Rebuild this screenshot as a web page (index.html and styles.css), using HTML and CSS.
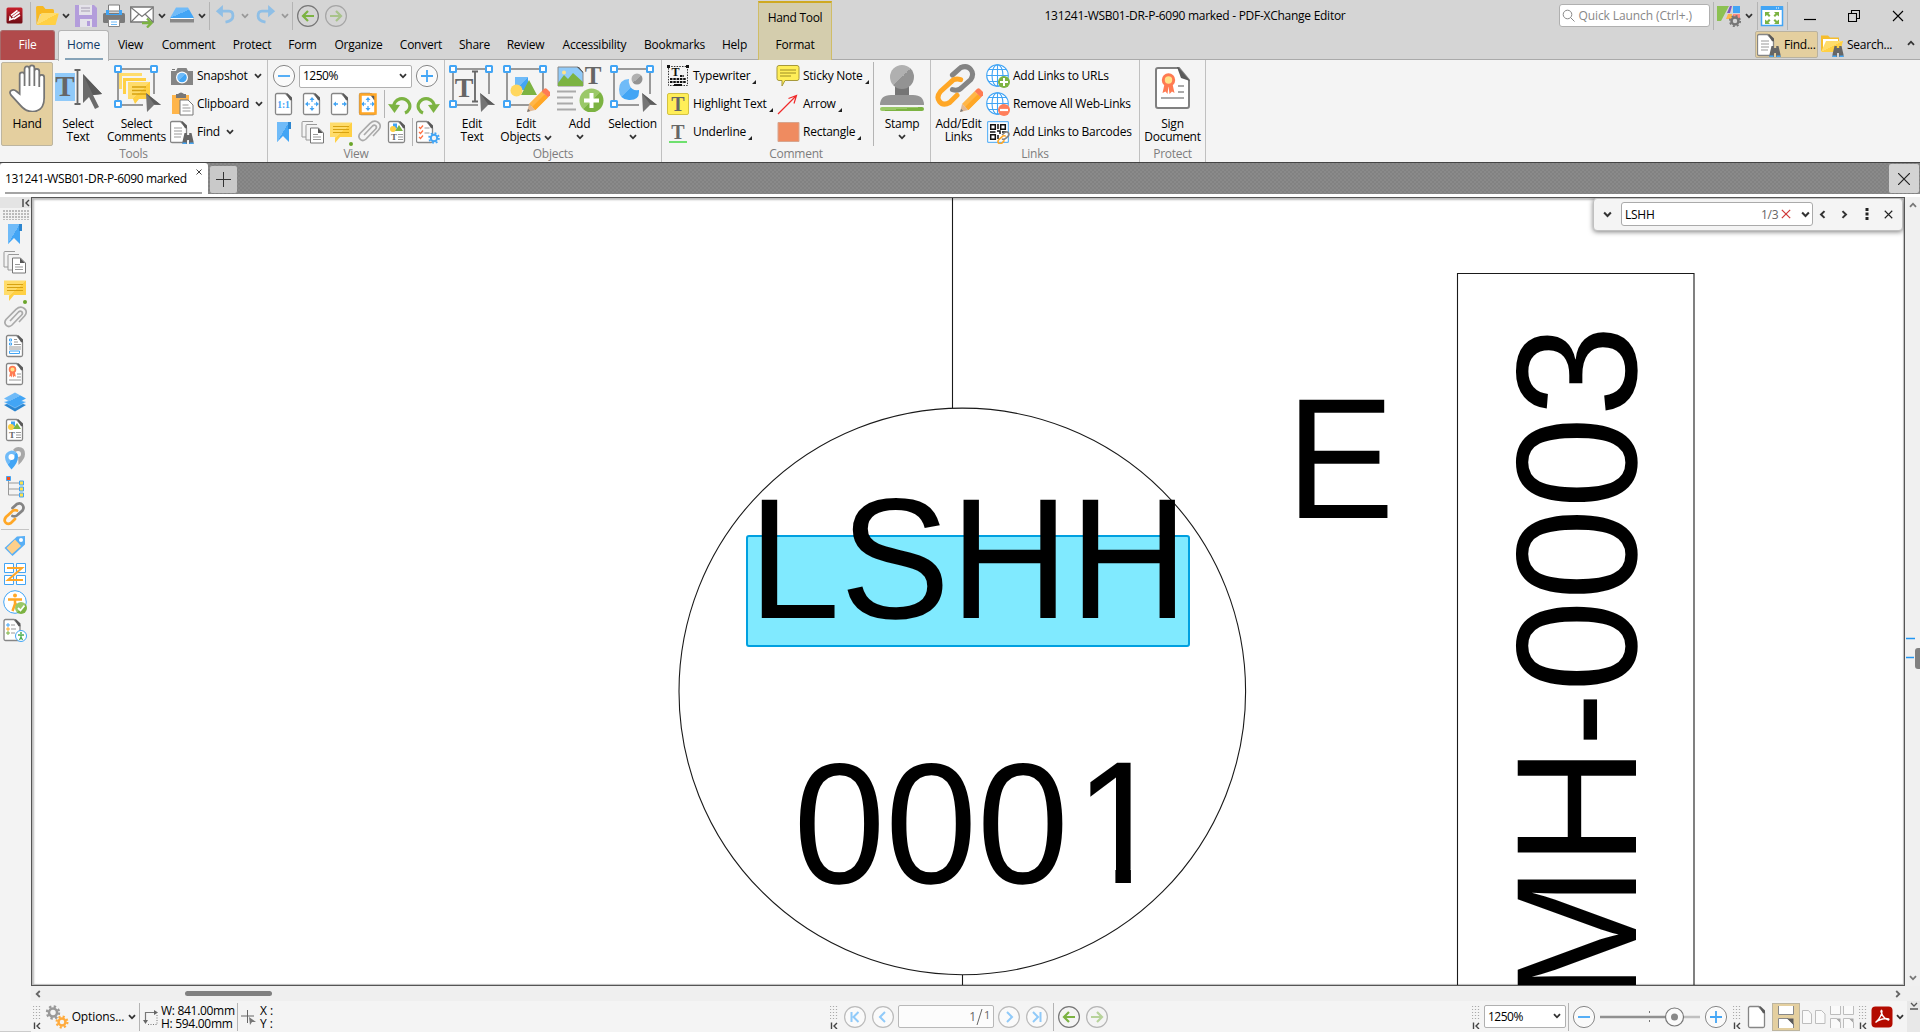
FILE: index.html
```html
<!DOCTYPE html>
<html lang="en">
<head>
<meta charset="utf-8">
<title>131241-WSB01-DR-P-6090 marked - PDF-XChange Editor</title>
<link rel="stylesheet" href="styles.css">
</head>
<body>
<svg class="defs" aria-hidden="true">
  <defs>
    <linearGradient id="gold" x1="0" y1="0" x2="1" y2="1"><stop offset=".5" stop-color="#ffdc6b"/><stop offset=".5" stop-color="#ffd044"/></linearGradient>
    <linearGradient id="azure" x1="0" y1="0" x2="1" y2="1"><stop offset=".5" stop-color="#70bbf8"/><stop offset=".5" stop-color="#42a5f5"/></linearGradient>
    <linearGradient id="iron" x1="0" y1="0" x2="1" y2="1"><stop offset=".5" stop-color="#b0b0b0"/><stop offset=".5" stop-color="#939393"/></linearGradient>
    <linearGradient id="leaf" x1="0" y1="0" x2="1" y2="1"><stop offset=".5" stop-color="#9ac868"/><stop offset=".5" stop-color="#7cb342"/></linearGradient>
    <linearGradient id="ruby" x1="0" y1="0" x2="0" y2="1"><stop offset="0" stop-color="#c8202c"/><stop offset="1" stop-color="#6e0c14"/></linearGradient>
  </defs>
  <symbol id="chev" viewBox="0 0 8 6"><path d="M1 1.2 4 4.3 7 1.2" fill="none" stroke="currentColor" stroke-width="1.8"/></symbol>
  <symbol id="page" viewBox="0 0 24 24"><path d="M5 1.5h8.5l6 6.5v13a1.5 1.5 0 0 1-1.500 1.500H5A1.500 1.500 0 0 1 3.500 21V3A1.500 1.500 0 0 1 5 1.500z" fill="#fff" stroke="#868686" stroke-width="1.300"/><path d="M14 1.200h1.500L20 5.500V8.200h-2z" fill="#5a5a5a"/></symbol>
  <symbol id="handle" viewBox="0 0 8 8"><rect x="1" y="1" width="6" height="6" rx=".5" fill="#fff" stroke="#42a5f5" stroke-width="2"/></symbol>
  <symbol id="frame" viewBox="0 0 48 48"><path d="M5 5h36M5 5v36M41 5v25M5 41h25" fill="none" stroke="#999" stroke-width="2"/><use href="#handle" x="1" y="1" width="8" height="8"/><use href="#handle" x="37" y="1" width="8" height="8"/><use href="#handle" x="1" y="36" width="8" height="8"/></symbol>
  <symbol id="cursor" viewBox="0 0 16 20"><path d="M0 0 15 12H9l-1 0L1 19z" fill="#757575"/><path d="M0 0 15 12 8 11z" fill="#5c5c5c"/></symbol>
  <symbol id="pencil" viewBox="0 0 24 24"><path d="M1 23 3 15 9 21z" fill="#e0b894"/><path d="M3 15 15 3l6 6L9 21z" fill="#ffb648"/><path d="M6 18 18 6l3 3L9 21z" fill="#ffa726"/><path d="m15 3 2.500-2.300q1.200-.9 2.400 0l3.500 3.600q1 1.200 0 2.300L21 9z" fill="#ff7b52"/><path d="M1 23 2 20l2 2z" fill="#777"/></symbol>
  <symbol id="bino" viewBox="0 0 12 12"><path d="M2.500 1h2.300v2h2.400V1h2.300l2 8.500V12H7V8H5v4H.5V9.500z" fill="#666"/><path d="M.5 10.500h4V12h-4zM7.500 10.500h4V12h-4z" fill="#42a5f5"/></symbol>
  <symbol id="app" viewBox="0 0 17 17"><rect x=".5" y=".5" width="16" height="16" rx="1.500" fill="url(#ruby)"/><path d="M5 8.300 11.500 3.500M6.500 10l7-5M8 12l6-4" stroke="#fff" stroke-width="1.600"/><path d="m3.500 8.500-.7 5.500 5.800-2-1-1.500-2.500 1-.3-1.300z" fill="#fff"/></symbol>
  <symbol id="folder" viewBox="0 0 24 24"><path d="M1 3.500q0-1.500 1.500-1.500H8l2.500 3h7q1.500 0 1.500 1.500V10H5L1.500 21z" fill="#f7b821"/><path d="M6.500 9h16q1.500 0 1 1.500L20.500 21H1.500z" fill="url(#gold)"/></symbol>
  <symbol id="save" viewBox="0 0 24 24"><path d="M1 1h19l3 3v19H1z" fill="#b39ddb"/><path d="M5 1h13v10H5zM6 15h12v8H6z" fill="#e4e2ea"/><path d="M7 4h9M7 7h9" stroke="#b9b4c4" stroke-width="1.500"/><path d="M13 17h3v5h-3z" fill="#b39ddb"/></symbol>
  <symbol id="print" viewBox="0 0 24 24"><path d="M6.500 1h11v6h-11z" fill="#fff" stroke="#7c7c7c"/><rect x="1" y="9" width="22" height="10" rx="1.500" fill="#7b7b7b"/><path d="M4 6h3v4h10V6h3v5H4z" fill="#42a5f5"/><path d="M6.500 15.500h11v7h-11z" fill="#fff" stroke="#888"/><path d="M9 18h6M9 20.500h6" stroke="#70bbf8"/></symbol>
  <symbol id="mail" viewBox="0 0 24 24"><path d="M.7 3h22.500v15H.7z" fill="#fff" stroke="#777" stroke-width="1.300"/><path d="m1 3.500 11 9 11-9M1 18l8-8M23 18l-8-8" fill="none" stroke="#777" stroke-width="1.100"/><path d="M12 19h9m-4-4.500 4.500 4.500-4.500 4.500" fill="none" stroke="#7cb342" stroke-width="2.300"/></symbol>
  <symbol id="scan" viewBox="0 0 24 24"><path d="M6 3.500h12L24 14H0z" fill="url(#azure)"/><path d="M0 15h24v3.500H0z" fill="#888"/><path d="M1 14.500h22" stroke="#fff"/></symbol>
  <symbol id="undo" viewBox="0 0 24 24"><path d="M4 8h12q4.500 0 4.500 5.500T12 20.500" transform="translate(0 -1)" fill="none" stroke="#8fbfe6" stroke-width="3.200"/><path d="M1 7 9 0v14z" fill="#8fbfe6"/></symbol>
  <symbol id="ring" viewBox="0 0 24 24"><circle cx="12" cy="12" r="10.400" fill="#fafafa" stroke="currentColor" stroke-width="1.200"/></symbol>
  <symbol id="back" viewBox="0 0 24 24"><circle cx="12" cy="12" r="10.400" fill="none" stroke="#777" stroke-width="1.200"/><path d="M18 12H7m5-5-5 5 5 5" fill="none" stroke="#7cb342" stroke-width="2.200"/></symbol>
  <symbol id="minus" viewBox="0 0 24 24"><circle cx="12" cy="12" r="10.600" fill="#fafafa" stroke="#888"/><path d="M6 12h12" stroke="#42a5f5" stroke-width="1.800"/></symbol>
  <symbol id="plus" viewBox="0 0 24 24"><circle cx="12" cy="12" r="10.600" fill="#fafafa" stroke="#888"/><path d="M6 12h12M12 6v12" stroke="#42a5f5" stroke-width="1.800"/></symbol>
  <symbol id="uiset" viewBox="0 0 24 24"><path d="M0 2h12L4 17H0z" fill="#8cc152"/><path d="M13 2h2l-2 7h-3z" fill="#7e57c2"/><path d="M16 2h7v7h-7z" fill="#42a5f5"/><path d="M11 10h4v5H9z" fill="#ffb74d"/><path d="M16 10h7v5h-7z" fill="#ff8a80"/><circle cx="18" cy="17" r="3.500" fill="#d5d5d5" stroke="#757575" stroke-width="2.500"/><circle cx="18" cy="17" r="5.200" fill="none" stroke="#757575" stroke-width="1.700" stroke-dasharray="2.040 2.040"/></symbol>
  <symbol id="full" viewBox="0 0 24 24"><path d="M1.500 3h21v18.500h-21z" fill="#fff" stroke="#42a5f5" stroke-width="1.500"/><path d="M1 2h22v4H1z" fill="#42a5f5"/><path d="M16 4h4" stroke="#fff" stroke-dasharray="1 1"/><path d="M5 8h5L8.500 9.500l2 2-1.500 1.500-2-2L5 12.500zM19 8h-5l1.500 1.500-2 2L15 13l2-2 2 1.500zM5 20h5l-1.500-1.500 2-2L9 15l-2 2-2-1.500zM19 20h-5l1.500-1.500-2-2L15 15l2 2 2-1.500z" fill="#7cb342"/></symbol>
  <symbol id="findpg" viewBox="0 0 24 24"><use href="#page" x="-3" width="24" height="24"/><path d="M4 8h8M4 11h8M4 14h8M4 17h7" stroke="#999"/><use href="#bino" x="12" y="12" width="12" height="12"/></symbol>
  <symbol id="findfd" viewBox="0 0 24 24"><path d="M1 2.500h7l2 2h9V18H1z" fill="#f5bd2d"/><path d="M3 6h15v9H3z" fill="#fff"/><path d="M6 8h17l-3 11H1z" fill="url(#gold)"/><use href="#bino" x="12" y="12" width="12" height="12"/></symbol>
  <symbol id="hand" viewBox="0 0 48 48"><path d="M17 30V10.500q0-2.500 2.500-2.500T22 10.500V22 5q0-3 2.500-3T27 5v17V3.500Q27 1 29.500 1T32 3.500V22 7q0-2.500 2.500-2.500T37 7v16V13q0-2.500 2.500-2.500T42 13v21q0 14-12 14-7 0-12-6L8 31q-2-3 .5-4.500T14 27.500z" fill="#fff" stroke="#757575" stroke-width="1.800" transform="translate(0 .5) scale(.98)"/></symbol>
  <symbol id="seltext" viewBox="0 0 48 48"><path d="M1 9h20v28H1z" fill="#90caf9"/><text x="11" y="32" class="serif" font-size="29" text-anchor="middle">T</text><path d="M20.500 6h6m-6 34h6M23.500 6v34" stroke="#666" stroke-width="1.800"/><path d="m29 10 19 20-9 1 6 12-4 2-6-12-6 6z" fill="#6b6b6b"/><path d="m29 10 19 20-9 1z" fill="#595959"/></symbol>
  <symbol id="note" viewBox="0 0 24 24"><path d="M1 2.500h22V17H11l-5 6v-6H1z" fill="url(#gold)"/><path d="M4 6.500h16M4 9.500h16M4 12.500h16" stroke="#d7a211"/></symbol>
  <symbol id="selcom" viewBox="0 0 48 48"><use href="#frame" width="48" height="48"/><path d="M6 9h23v3H9v13H6z" fill="#ffdc6b"/><path d="M10 14h23v3H13v13h-3z" fill="#ffd044"/><path d="M15 18h22v17H26l-4 5-2-5h-5z" fill="url(#gold)"/><path d="M19 23h14M19 26.500h14M19 30h14" stroke="#d7a211" stroke-width="1.500"/><use href="#cursor" x="33" y="29" width="16" height="20"/></symbol>
  <symbol id="camera" viewBox="0 0 24 24"><path d="M1 7h5l1.500-3h9L18 7h5v14H1z" fill="#858585"/><path d="M2 5h3v1H2z" fill="#777"/><circle cx="12" cy="13.500" r="6" fill="#fff"/><circle cx="12" cy="13.500" r="4.800" fill="url(#azure)"/></symbol>
  <symbol id="clip" viewBox="0 0 24 24"><path d="M2 3h17v19H2z" fill="#ffb54a"/><path d="M6 2h2q3-3 6 0h2v4H6z" fill="#777"/><path d="M10 8h8l5 5v10H10z" fill="#fff" stroke="#777"/><path d="M12.500 13h6M12.500 16h8M12.500 19h8" stroke="#999"/></symbol>
  <symbol id="p11" viewBox="0 0 24 24"><use href="#page" width="24" height="24"/><text x="11.500" y="16" class="serif blue" font-size="9.500" text-anchor="middle">1:1</text></symbol>
  <symbol id="pfit" viewBox="0 0 24 24"><use href="#page" width="24" height="24"/><path d="m12 5 2.500 3h-5zM12 19l2.500-3h-5zM5 12l3-2.500v5zM19 12l-3-2.500v5z" fill="#42a5f5"/><path d="M12 7v3m0 4v3M7 12h3m4 0h3" stroke="#42a5f5" stroke-width="1.200"/></symbol>
  <symbol id="pwid" viewBox="0 0 24 24"><use href="#page" width="24" height="24"/><path d="m5 12 3-2.500v5zM19 12l-3-2.500v5z" fill="#42a5f5"/><path d="M7 12h3m4 0h3" stroke="#42a5f5" stroke-width="1.500"/></symbol>
  <symbol id="pvis" viewBox="0 0 24 24"><use href="#pfit" width="24" height="24"/><path d="M4.500 2.500h15v19h-15z" fill="none" stroke="#ffa726" stroke-width="2.500"/></symbol>
  <symbol id="rot" viewBox="0 0 24 24"><path d="M6 15.500a8 7.500 0 1 1 11 5.500" fill="none" stroke="#7cb342" stroke-width="3.200"/><path d="m0 12 12 1-5.500 8z" fill="#7cb342"/></symbol>
  <symbol id="mark" viewBox="0 0 24 24"><path d="M5 2h12v20l-6-6-6 6z" fill="url(#azure)"/><path d="M16 2h3v7h-3z" fill="#2c86d0"/></symbol>
  <symbol id="pages" viewBox="0 0 24 24"><path d="M12 1.500H2q-1 0-1 1V17h4M16 4.500H6q-1 0-1 1V20h4" fill="none" stroke="#999"/><path d="M9.500 8h8l5 5v10h-13z" fill="#fff" stroke="#777"/><path d="M17 8v5h5z" fill="#555"/><path d="M12 14.500h5M12 17h8M12 19.500h8" stroke="#999"/></symbol>
  <symbol id="paper" viewBox="0 0 24 24"><path d="m7 15 8.500-9q1.800-1.600 3.200-.3 1.500 1.500-.1 3.300L9 19q-3 2.800-5.700.4T3 13.500L13 3.300Q17.500-.5 21.300 2.500t.2 7.500L16 16" fill="none" stroke="#aaa" stroke-width="1.700"/></symbol>
  <symbol id="content" viewBox="0 0 24 24"><use href="#page" width="24" height="24"/><path d="m8 3.500 4 0v5H8z" fill="#42a5f5"/><circle cx="8" cy="9" r="3" fill="#ffd044"/><path d="m14 5 4 6h-8z" fill="#7cb342"/><text x="9" y="20" class="serif" font-size="9" text-anchor="middle">T</text><path d="M13 14.500h5M13 17h5M13 19.500h5" stroke="#999"/></symbol>
  <symbol id="popt" viewBox="0 0 24 24"><use href="#page" x="-3" width="24" height="24"/><path d="m3 7 1.500 1.500L7 5.500M3 12l1.500 1.500L7 10.500M3 17l1.500 1.500L7 15.500" fill="none" stroke="#ff7043" stroke-width="1.200"/><path d="M8.500 8h5M8.500 13h5" stroke="#999"/><circle cx="18" cy="18" r="3.200" fill="#f4f4f4" stroke="#42a5f5" stroke-width="2"/><circle cx="18" cy="18" r="4.900" fill="none" stroke="#42a5f5" stroke-width="1.800" stroke-dasharray="1.900 1.940"/></symbol>
  <symbol id="edtext" viewBox="0 0 48 48"><use href="#frame" width="48" height="48"/><text x="16" y="33" class="serif" font-size="28" text-anchor="middle">T</text><path d="M24 7.500h6m-6 30h6m-3-30v30" stroke="#666" stroke-width="1.800"/><use href="#cursor" x="32" y="29" width="16" height="20"/></symbol>
  <symbol id="edobj" viewBox="0 0 48 48"><use href="#frame" width="48" height="48"/><path d="M13 13h13v13H13z" fill="url(#azure)"/><path d="m27 16 8 15H19z" fill="#7cb342"/><circle cx="14.500" cy="26.500" r="6" fill="#ffd75e"/><use href="#pencil" x="24" y="24" width="25" height="25"/></symbol>
  <symbol id="addobj" viewBox="0 0 48 48"><path d="M2 3h20l5 5v14H2z" fill="#90caf9" stroke="#888"/><path d="m21 3 6 6v-1l-4-5z" fill="#555"/><circle cx="8" cy="8.500" r="2" fill="#ffe28a"/><path d="m2 19 6-8 4 4 5-6 10 9v4H2z" fill="#7cb342"/><text x="37" y="20" class="serif" font-size="25" text-anchor="middle">T</text><path d="M1 27.500h19M1 33.500h16M1 39.500h16M1 45.500h19" stroke="#aaa" stroke-width="1.800"/><circle cx="35.500" cy="36.500" r="12" fill="url(#leaf)"/><path d="M35.500 29v15M28 36.500h15" stroke="#fff" stroke-width="4"/></symbol>
  <symbol id="selobj" viewBox="0 0 48 48"><use href="#frame" width="48" height="48"/><circle cx="28" cy="15" r="5.500" fill="url(#iron)"/><path d="M20 15q-10 .5-10 10.500T20 36t10-8v-2q-7 1-9-4-2-4-1-7z" fill="url(#azure)"/><use href="#cursor" x="33" y="29" width="16" height="20"/></symbol>
  <symbol id="type" viewBox="0 0 24 24"><path d="M2.500 2.500h19v19h-19z" fill="none" stroke="#333" stroke-dasharray="1.500 1.200"/><path d="M1 1h3v3H1zM20 1h3v3h-3z" fill="#111"/><text x="9.500" y="12" class="serif dark" font-size="12" text-anchor="middle">T</text><path d="M14 12h4M4 15h16M4 18h16" stroke="#111" stroke-width="1.800" stroke-dasharray="2.500 .8"/><path d="M8 21h8" stroke="#111" stroke-width="2"/></symbol>
  <symbol id="hilite" viewBox="0 0 24 24"><rect x="1.500" y="1.500" width="21" height="21" rx="1.500" fill="#ffee58" stroke="#d3c243"/><text x="12" y="18.500" class="serif" font-size="20" text-anchor="middle">T</text></symbol>
  <symbol id="under" viewBox="0 0 24 24"><text x="12" y="18.500" class="serif" font-size="20" text-anchor="middle">T</text><path d="M3 22h18" stroke="#26d526" stroke-width="1.300"/></symbol>
  <symbol id="sticky" viewBox="0 0 24 24"><path d="M3 1.500h18q2 0 2 2v11q0 2-2 2H9L6 22v-5.500H3q-2 0-2-2v-11q0-2 2-2z" fill="#ffee58" stroke="#a7993a"/><path d="M4 6h16M4 9h16M4 12h11" stroke="#9c8c25"/></symbol>
  <symbol id="arrow" viewBox="0 0 24 24"><path d="M2 22 20 4M12.500 6.500 20.500 3.500l-2.500 8" fill="none" stroke="#f02a2a" stroke-width="1.200"/></symbol>
  <symbol id="rect" viewBox="0 0 24 24"><path d="M2 2.500h21v19H2z" fill="#ef8b60" stroke="#d8a58e"/></symbol>
  <symbol id="stamp" viewBox="0 0 48 48"><path d="M17 20h14v12H17z" fill="#757575"/><circle cx="24" cy="13" r="12" fill="url(#iron)"/><path d="M2 41q0-10 11-10h22q11 0 11 10z" fill="#959595"/><rect x="2" y="43" width="44" height="4" rx="2" fill="url(#leaf)"/></symbol>
  <symbol id="chain" viewBox="0 0 48 48"><g fill="none" stroke-width="5.500" stroke-linecap="round"><path d="M19 28q7 2 11-3l9-8q4-6 0-11t-11-2l-9 8" stroke="#848484"/><path d="M28 17q-7-2-11 3l-11 10q-5 6-1 11t11 1l8-8" stroke="#ffa726"/></g></symbol>
  <symbol id="links" viewBox="0 0 48 48"><use href="#chain" x="0" y="0" width="44" height="44"/><use href="#pencil" x="24" y="24" width="25" height="25"/></symbol>
  <symbol id="globe" viewBox="0 0 24 24"><circle cx="11.500" cy="11.500" r="10.800" fill="#fff"/><g fill="none" stroke="#42a5f5" stroke-width="1.100"><circle cx="11.500" cy="11.500" r="10.800"/><ellipse cx="11.500" cy="11.500" rx="5.500" ry="10.800"/><path d="M1 11.500h21M11.500 1v21M3 5.500h17M3 17.500h17"/></g></symbol>
  <symbol id="gadd" viewBox="0 0 24 24"><use href="#globe" width="24" height="24"/><circle cx="18" cy="18" r="6" fill="#7cb342"/><path d="M18 14v8M14 18h8" stroke="#fff" stroke-width="2"/></symbol>
  <symbol id="grem" viewBox="0 0 24 24"><use href="#globe" width="24" height="24"/><circle cx="18" cy="18" r="6" fill="#ff7e5a"/><path d="M14 18h8" stroke="#fff" stroke-width="2.200"/></symbol>
  <symbol id="qr" viewBox="0 0 24 24"><path d="M1.700 1.700h20.600v20.600H1.700z" fill="#fff" stroke="#42a5f5"/><g fill="none" stroke="#111" stroke-width="1.500"><path d="M4.700 4.700h4.600v4.600H4.700zM14.700 4.700h4.600v4.600h-4.600zM4.700 14.700h4.600v4.600H4.700zM12 4v5M9.500 12H4m7-1h3v3m2-2h4m-8 3v4"/></g><use href="#chain" x="11" y="11" width="14" height="14"/></symbol>
  <symbol id="rosette" viewBox="0 0 16 24"><path d="m4 12-2 9 3-1.500L7 22l1-8 1 8 2.500-2.500L14 21l-2-9z" fill="#ff7b52"/><circle cx="8" cy="8" r="5.200" fill="#ffe28a" stroke="#ff7b52" stroke-width="3"/></symbol>
  <symbol id="sign" viewBox="0 0 48 48"><path d="M9 4h21l10 12v26q0 2-2 2H9q-2 0-2-2V6q0-2 2-2z" fill="#fff" stroke="#808080" stroke-width="2"/><path d="m28 3 1 0 12 14-9-3z" fill="#5a5a5a"/><use href="#rosette" x="11" y="8" width="17" height="24"/><path d="M29 22h6M29 28h6M12 34h23" stroke="#aaa" stroke-width="1.800"/></symbol>
  <symbol id="psign" viewBox="0 0 24 24"><use href="#page" width="24" height="24"/><use href="#rosette" x="5" y="3" width="9" height="13.500"/><path d="M14 12h4M14 15h4M6 18h12" stroke="#999"/></symbol>
  <symbol id="pform" viewBox="0 0 24 24"><use href="#page" width="24" height="24"/><path d="M6.500 5h2v2h-2zM6.500 9h2v2h-2zM6.500 17h10v2.500h-10z" fill="none" stroke="#42a5f5"/><path d="M11 5.500h3M11 8h4M11 10.500h7M6 13h12M6 15h12" stroke="#999"/></symbol>
  <symbol id="layers" viewBox="0 0 24 24"><path d="m12 11 11 4-11 6.500L1 15z" fill="#2a85d0"/><path d="m12 9 11 3-11 6L1 12z" fill="#42a5f5" stroke="#cfe6fa" stroke-width=".4"/><path d="m12 2.500 11 6-11 6-11-6z" fill="url(#azure)"/></symbol>
  <symbol id="dest" viewBox="0 0 24 24"><path d="M10 4q2-3 5.500-3 6.500 0 6.500 7 0 5-6.500 11L15 8z" fill="#a8a8a8"/><circle cx="15" cy="8" r="3" fill="#f4f4f4"/><path d="M8.500 23.500Q2 16 2 11t6.500-6.500Q15 5 15 11T8.500 23.500z" fill="url(#azure)"/><circle cx="8.500" cy="11" r="3" fill="#fff"/></symbol>
  <symbol id="tree" viewBox="0 0 24 24"><path d="M5.500 6v15H17M5.500 9H17M5.500 15H17" fill="none" stroke="#999"/><path d="M3.500 2.500h4v4h-4z" fill="#f4511e" stroke="#42a5f5"/><path d="M16.500 7h4v4h-4zM16.500 13h4v4h-4zM16.500 19h4v4h-4z" fill="#ffe04a" stroke="#42a5f5"/></symbol>
  <symbol id="tag" viewBox="0 0 24 24"><path d="M14 2.500 22 2v8.500L9.500 22 1.500 14z" fill="#58aff6"/><path d="M12 5.500 18 12l-9 8-5.500-6z" fill="#ffd08a"/><circle cx="18" cy="6" r="2" fill="#fff"/></symbol>
  <symbol id="order" viewBox="0 0 24 24"><path d="M1.500 1.500h9v9h-9zM13.500 1.500h9v9h-9zM1.500 13.500h9v9h-9zM13.500 13.500h9v9h-9z" fill="#fff" stroke="#42a5f5"/><path d="M4 6h15L5 18h15" fill="none" stroke="#ffa726" stroke-width="2"/></symbol>
  <symbol id="acc" viewBox="0 0 24 24"><circle cx="12" cy="12" r="11.300" fill="#fff" stroke="#42a5f5"/><circle cx="12" cy="5.500" r="2" fill="#ffa726"/><path d="M5 9.500h14M12 9v5l-2.500 7M12 13l2 3" fill="none" stroke="#ffa726" stroke-width="2.500"/><circle cx="18" cy="18" r="6" fill="url(#leaf)"/><path d="m15 18 2.500 2.500 4-5" fill="none" stroke="#fff" stroke-width="1.800"/></symbol>
  <symbol id="accrep" viewBox="0 0 24 24"><use href="#page" x="-2.500" width="24" height="24"/><path d="M4 6h2v2H4z" fill="none" stroke="#42a5f5"/><path d="M4 10h2v2H4z" fill="none" stroke="#ffa726"/><path d="M4 14h2v2H4z" fill="none" stroke="#7cb342"/><path d="M8 7h4M8 11h5M8 15h4" stroke="#999"/><circle cx="18" cy="18" r="5.500" fill="#fff" stroke="#42a5f5"/><circle cx="18" cy="15" r="1" fill="#4caf50"/><path d="M15 17h6m-3 0v2l-1.500 3m1.500-3 1.500 3" stroke="#4caf50" stroke-width="1.300" fill="none"/></symbol>
  <symbol id="x" viewBox="0 0 12 12"><path d="m1 1 10 10M11 1 1 11" stroke="currentColor" stroke-width="1.500"/></symbol>
  <symbol id="dockgrip" viewBox="0 0 9 24"><path d="M.5 1v14M3.500 1v14M6.500 1v14" stroke="#aaa" stroke-dasharray="1 2" stroke-width="1.200"/><path d="M1.500 17.500v7M7 18l-3 3 3 3" fill="none" stroke="#444" stroke-width="1.400"/></symbol>
  <symbol id="gears" viewBox="0 0 24 24"><circle cx="8" cy="7.500" r="4" fill="none" stroke="#999" stroke-width="2.500"/><circle cx="8" cy="7.500" r="6" fill="none" stroke="#999" stroke-width="2.400" stroke-dasharray="2.350 2.360"/><circle cx="17" cy="17" r="3.500" fill="none" stroke="#ffab3d" stroke-width="2.500"/><circle cx="17" cy="17" r="5.400" fill="none" stroke="#ffab3d" stroke-width="2.200" stroke-dasharray="2.120 2.120"/></symbol>
</svg>

<header class="titlebar">
  <svg class="i17"><use href="#app"/></svg>
  <i class="sep"></i>
  <svg class="i24"><use href="#folder"/></svg><svg class="chev"><use href="#chev"/></svg>
  <svg class="i24"><use href="#save"/></svg>
  <svg class="i24"><use href="#print"/></svg>
  <svg class="i24"><use href="#mail"/></svg><svg class="chev"><use href="#chev"/></svg>
  <svg class="i24"><use href="#scan"/></svg><svg class="chev"><use href="#chev"/></svg>
  <i class="sep"></i>
  <svg class="i20"><use href="#undo"/></svg><svg class="chev off"><use href="#chev"/></svg>
  <svg class="i20 flip"><use href="#undo"/></svg><svg class="chev off"><use href="#chev"/></svg>
  <i class="sep"></i>
  <svg class="i24"><use href="#back"/></svg>
  <svg class="i24 flip dim"><use href="#back"/></svg>
  <span></span>
  <div class="context-head">Hand Tool</div>
  <div class="title">131241-WSB01-DR-P-6090 marked - PDF-XChange Editor</div>
  <div class="quick"><svg class="lens" viewBox="0 0 14 14"><circle cx="5.500" cy="5.500" r="4.300" fill="none" stroke="#888"/><path d="m8.500 8.500 4 4" stroke="#888"/></svg><span>Quick Launch (Ctrl+.)</span></div>
  <i class="sep"></i>
  <svg class="i24"><use href="#uiset"/></svg><svg class="chev"><use href="#chev"/></svg>
  <i class="sep"></i>
  <svg class="i24"><use href="#full"/></svg>
  <i class="sep"></i>
  <svg class="i12" viewBox="0 0 12 12"><path d="M0 9.500h12" stroke="#000" stroke-width="1.200"/></svg>
  <svg class="i12" viewBox="0 0 12 12"><path d="M.5 3.500h8v8h-8zM3.500 3.500v-3h8v8h-3" fill="none" stroke="#000" stroke-width="1.100"/></svg>
  <svg class="i12 thin" viewBox="0 0 12 12"><path d="m1 1 10 10M11 1 1 11" stroke="#000" stroke-width="1.100"/></svg>
</header>

<nav class="menu">
  <div class="file">File</div><span></span><div class="home">Home</div>
  <div>View</div><div>Comment</div><div>Protect</div><div>Form</div><div>Organize</div><div>Convert</div><div>Share</div><div>Review</div><div>Accessibility</div><div>Bookmarks</div><div>Help</div>
  <span></span><div class="context-tab">Format</div><span></span>
  <div class="find-btn"><svg class="i24"><use href="#findpg"/></svg>Find...</div>
  <div class="search-btn"><svg class="i24"><use href="#findfd"/></svg>Search...</div>
  <svg class="chev up"><use href="#chev"/></svg>
</nav>

<section class="ribbon">
  <div class="group tools">
    <div class="body">
      <div class="big on"><svg class="i48"><use href="#hand"/></svg><span>Hand</span></div>
      <div class="big"><svg class="i48"><use href="#seltext"/></svg><span>Select</span><span>Text</span></div>
      <div class="big"><svg class="i48"><use href="#selcom"/></svg><span>Select</span><span>Comments</span></div>
      <div class="stack">
        <div><svg class="i24"><use href="#camera"/></svg>Snapshot<svg class="chev"><use href="#chev"/></svg></div>
        <div><svg class="i24"><use href="#clip"/></svg>Clipboard<svg class="chev"><use href="#chev"/></svg></div>
        <div><svg class="i24"><use href="#findpg"/></svg>Find<svg class="chev"><use href="#chev"/></svg></div>
      </div>
    </div>
    <div class="caption">Tools</div>
  </div>
  <div class="group view">
    <div class="body rows">
      <div class="zoomrow"><svg class="i24"><use href="#minus"/></svg><div class="combo">1250%<svg class="chev"><use href="#chev"/></svg></div><svg class="i24"><use href="#plus"/></svg></div>
      <div class="fitrow"><svg class="i24"><use href="#p11"/></svg><svg class="i24"><use href="#pfit"/></svg><svg class="i24"><use href="#pwid"/></svg><svg class="i24"><use href="#pvis"/></svg><i class="sep"></i><svg class="i24"><use href="#rot"/></svg><svg class="i24 flip"><use href="#rot"/></svg></div>
      <div class="panerow"><svg class="i24"><use href="#mark"/></svg><svg class="i24"><use href="#pages"/></svg><span class="noted"><svg class="i24"><use href="#note"/></svg></span><svg class="i24"><use href="#paper"/></svg><svg class="i24"><use href="#content"/></svg><i class="sep"></i><svg class="i24"><use href="#popt"/></svg></div>
    </div>
    <div class="caption">View</div>
  </div>
  <div class="group objects">
    <div class="body">
      <div class="big"><svg class="i48"><use href="#edtext"/></svg><span>Edit</span><span>Text</span></div>
      <div class="big"><svg class="i48"><use href="#edobj"/></svg><span>Edit</span><span>Objects <svg class="chev"><use href="#chev"/></svg></span></div>
      <div class="big"><svg class="i48"><use href="#addobj"/></svg><span>Add</span><svg class="chev"><use href="#chev"/></svg></div>
      <div class="big"><svg class="i48"><use href="#selobj"/></svg><span>Selection</span><svg class="chev"><use href="#chev"/></svg></div>
    </div>
    <div class="caption">Objects</div>
  </div>
  <div class="group comment">
    <div class="body">
      <div class="stack">
        <div><svg class="i24"><use href="#type"/></svg>Typewriter<b class="tri"></b></div>
        <div><svg class="i24"><use href="#hilite"/></svg>Highlight Text<b class="tri"></b></div>
        <div><svg class="i24"><use href="#under"/></svg>Underline<b class="tri"></b></div>
      </div>
      <div class="stack">
        <div><svg class="i24"><use href="#sticky"/></svg>Sticky Note<b class="tri"></b></div>
        <div><svg class="i24"><use href="#arrow"/></svg>Arrow<b class="tri"></b></div>
        <div><svg class="i24"><use href="#rect"/></svg>Rectangle<b class="tri"></b></div>
      </div>
      <i class="sep tall"></i>
      <div class="big"><svg class="i48"><use href="#stamp"/></svg><span>Stamp</span><svg class="chev"><use href="#chev"/></svg></div>
    </div>
    <div class="caption">Comment</div>
  </div>
  <div class="group linkgrp">
    <div class="body">
      <div class="big"><svg class="i48"><use href="#links"/></svg><span>Add/Edit</span><span>Links</span></div>
      <div class="stack">
        <div><svg class="i24"><use href="#gadd"/></svg>Add Links to URLs</div>
        <div><svg class="i24"><use href="#grem"/></svg>Remove All Web-Links</div>
        <div><svg class="i24"><use href="#qr"/></svg>Add Links to Barcodes</div>
      </div>
    </div>
    <div class="caption">Links</div>
  </div>
  <div class="group protect">
    <div class="body"><div class="big"><svg class="i48"><use href="#sign"/></svg><span>Sign</span><span>Document</span></div></div>
    <div class="caption">Protect</div>
  </div>
</section>

<section class="doctabs">
  <div class="doctab"><span>131241-WSB01-DR-P-6090 marked</span><svg class="tabx"><use href="#x"/></svg></div>
  <div class="newtab"><svg width="15" height="15" viewBox="0 0 15 15"><path d="M0 7.500h15M7.500 0v15" stroke="#333"/></svg></div>
  <div class="closeall"><svg width="12" height="12" viewBox="0 0 12 12"><path d="M0 0 12 12M12 0 0 12" stroke="#222" stroke-width="1.200"/></svg></div>
</section>

<main class="work">
  <aside class="side">
    <div class="pin"><svg width="8" height="8" viewBox="0 0 8 8"><path d="M1 0v8M7 1 4 4l3 3" fill="none" stroke="#444" stroke-width="1.400"/></svg></div>
    <div class="grip"></div>
    <svg class="i24"><use href="#mark"/></svg>
    <svg class="i24"><use href="#pages"/></svg>
    <span class="noted"><svg class="i24"><use href="#note"/></svg></span>
    <svg class="i24"><use href="#paper"/></svg>
    <svg class="i24"><use href="#pform"/></svg>
    <svg class="i24"><use href="#psign"/></svg>
    <svg class="i24"><use href="#layers"/></svg>
    <svg class="i24"><use href="#content"/></svg>
    <svg class="i24"><use href="#dest"/></svg>
    <svg class="i24"><use href="#tree"/></svg>
    <svg class="i24"><use href="#chain"/></svg>
    <hr>
    <svg class="i24"><use href="#tag"/></svg>
    <svg class="i24"><use href="#order"/></svg>
    <svg class="i24"><use href="#acc"/></svg>
    <svg class="i24"><use href="#accrep"/></svg>
  </aside>

  <div class="right">
    <div class="viewrow">
      <div class="viewport">
        <svg class="drawing" viewBox="32 198 1872 787" width="1872" height="787">
          <rect x="747" y="536" width="442" height="110" rx="2" fill="#80eaff" stroke="#00a0e0" stroke-width="2"/>
          <g fill="none" stroke="#1a1a1a" stroke-width="1.100">
            <path d="M952.500 198v210M962.500 975v10M1457.500 990V273.500H1694V990"/>
            <circle cx="962.300" cy="691.400" r="283.300"/>
          </g>
          <defs><clipPath id="stem"><path d="M0-125H95V-13.500H0zM41-14H56.500V2H41z"/></clipPath></defs>
          <g class="cad">
            <text transform="translate(748.300 618.100) scale(1 1.042)">LSHH</text>
            <text transform="translate(793.500 883.300) scale(1 1.042)">000</text>
            <text transform="translate(1074.400 883.300) scale(1 1.060)" clip-path="url(#stem)">1</text>
            <text transform="translate(1286 518.100) scale(.985 1.042)">E</text>
            <text transform="translate(1636 1003.500) rotate(-90) scale(1 1.042)">MH-0003</text>
          </g>
        </svg>
        <div class="findbar">
          <svg class="chev big-chev"><use href="#chev"/></svg>
          <div class="findbox"><span>LSHH</span><em>1/3</em><svg class="redx"><use href="#x"/></svg><svg class="chev"><use href="#chev"/></svg></div>
          <svg class="chev left"><use href="#chev"/></svg>
          <svg class="chev rightw"><use href="#chev"/></svg>
          <svg width="4" height="12" viewBox="0 0 4 12"><path d="M.5 0h3v3h-3zM.5 4.500h3v3h-3zM.5 9h3v3h-3z" fill="#222"/></svg>
          <svg class="fx"><use href="#x"/></svg>
        </div>
      </div>
      <div class="vscroll">
        <svg class="chev up grey"><use href="#chev"/></svg>
        <svg class="hits" viewBox="0 0 15 40" width="15" height="40"><path d="M1 8.500h9M1 27.500h8" stroke="#2196f3" stroke-width="1.300"/><rect x="10" y="18" width="8" height="21" rx="3" fill="#808080"/></svg>
        <svg class="chev grey"><use href="#chev"/></svg>
      </div>
    </div>
    <div class="hscroll"><svg class="chev left"><use href="#chev"/></svg><div class="thumb"></div><svg class="chev rightw"><use href="#chev"/></svg></div>
    <footer class="status">
      <svg class="dock"><use href="#dockgrip"/></svg>
      <svg class="i24"><use href="#gears"/></svg>
      <span class="opt">Options...</span><svg class="chev"><use href="#chev"/></svg>
      <i class="sep"></i>
      <svg class="i16" viewBox="0 0 16 16"><path d="M2.500 12V3.500H12" fill="none" stroke="#777" stroke-width="1.200"/><path d="M5 15.500h9V6" fill="none" stroke="#777" stroke-dasharray="1 1.500"/><path d="m11 1 4 2.500L11 6zM0 11h5l-2.500 4z" fill="#666"/></svg>
      <div class="dims">W: 841.00mm<br>H: 594.00mm</div>
      <i class="sep"></i>
      <svg class="i16" viewBox="0 0 16 16"><path d="M0 7h13M6.500 1v13" stroke="#666"/><path d="m8 8 7 5h-4l-2 3z" fill="#777"/></svg>
      <div class="xy">X :<br>Y :</div>
      <span></span>
      <svg class="dock"><use href="#dockgrip"/></svg>
      <svg class="i24 pager" viewBox="0 0 24 24"><use href="#ring" width="24" height="24"/><path d="M8.500 7v10M15.500 7l-5 5 5 5" fill="none" stroke="#90caf9" stroke-width="2"/></svg>
      <svg class="i24 pager" viewBox="0 0 24 24"><use href="#ring" width="24" height="24"/><path d="m14 7-5 5 5 5" fill="none" stroke="#90caf9" stroke-width="2"/></svg>
      <div class="pagebox"><span>1</span><svg width="8" height="18" viewBox="0 0 8 18"><path d="M1 17 6 1" stroke="#666"/></svg><sup>1</sup></div>
      <svg class="i24 pager" viewBox="0 0 24 24"><use href="#ring" width="24" height="24"/><path d="m10 7 5 5-5 5" fill="none" stroke="#90caf9" stroke-width="2"/></svg>
      <svg class="i24 pager" viewBox="0 0 24 24"><use href="#ring" width="24" height="24"/><path d="M15.500 7v10M8 7l5 5-5 5" fill="none" stroke="#90caf9" stroke-width="2"/></svg>
      <i class="sep"></i>
      <svg class="i24"><use href="#back"/></svg>
      <svg class="i24 flip dim"><use href="#back"/></svg>
      <span></span>
      <svg class="dock"><use href="#dockgrip"/></svg>
      <div class="combo">1250%<svg class="chev"><use href="#chev"/></svg></div>
      <i class="sep"></i>
      <svg class="i24"><use href="#minus"/></svg>
      <svg class="slider" viewBox="0 0 100 24" width="100" height="24"><path d="M0 12h74" stroke="#909090" stroke-width="2.500"/><path d="M74 12h26" stroke="#c0c0c0" stroke-width="2.500"/><path d="M49.500 6v2m0 7v2" stroke="#777"/><circle cx="74.500" cy="12" r="9" fill="#fafafa" stroke="#777" stroke-width="1.200"/><circle cx="74.500" cy="12" r="3.500" fill="#888"/></svg>
      <svg class="i24"><use href="#plus"/></svg>
      <svg class="dock"><use href="#dockgrip"/></svg>
      <svg class="i24"><use href="#page"/></svg>
      <div class="sel"><svg class="i24" viewBox="0 0 24 24"><path d="M4.500 1v8.500h15V1M4.500 23V13.500H14l5.500 5.500v4" fill="#fff" stroke="#888"/><path d="M13 13.500h6.500V20z" fill="#5a5a5a"/></svg></div>
      <svg class="i24 faint" viewBox="0 0 24 24"><path d="M.5 5.500h6l3 3.500v9.500h-9zM13.500 5.500h6l3.500 3.500v9.500h-9.500z" fill="#fff" stroke="#999"/></svg>
      <svg class="i24 faint" viewBox="0 0 24 24"><path d="M.5 1v8.500h10V1M13.500 1v8.500h10V1M.5 23v-9.500h6l4 4V23M13.500 23v-9.500h6l4 4V23" fill="#fff" stroke="#999"/><path d="M6 13.500h4.500V18zM19 13.500h4.500V18z" fill="#777"/></svg>
      <svg class="dock"><use href="#dockgrip"/></svg>
      <svg class="i24" viewBox="0 0 24 24"><rect x="1.500" y="1.500" width="21" height="21" rx="4" fill="#b30b00"/><path d="M5.500 17.500Q11 13 12 6.500q-.5-2.500-1 0 1.500 7 7.500 8.500 1.500-1.500-3-1.500-6 .5-10 4z" fill="none" stroke="#fff" stroke-width="1.400"/></svg>
      <svg class="chev"><use href="#chev"/></svg>
      <div class="more"><svg width="8" height="8" viewBox="0 0 8 8"><path d="m1 1 3 3 3-3M0 7h8" fill="none" stroke="#555" stroke-width="1.300"/></svg></div>
    </footer>
  </div>
</main>
</body>
</html>
```
FILE: styles.css
```css
* { box-sizing: border-box; }
body { margin: 0; width: 1920px; height: 1032px; overflow: hidden; display: flex; flex-direction: column; background: #f4f4f4; color: #000; font: 12px/13px "Open Sans", "Noto Sans", sans-serif; letter-spacing: -.25px; white-space: nowrap; }
svg { display: block; flex: none; }
.defs { position: absolute; width: 0; height: 0; }
.serif { font-family: "Liberation Serif", serif; font-weight: bold; fill: #666; letter-spacing: 0; }
.blue { fill: #42a5f5; }
.dark { fill: #111; }
.i12 { width: 12px; height: 12px; }
.i16 { width: 16px; height: 16px; }
.i17 { width: 17px; height: 17px; }
.i20 { width: 21px; height: 21px; }
.i24 { width: 24px; height: 24px; }
.i48 { width: 48px; height: 48px; }
.chev { width: 8px; height: 6px; color: #333; }
.chev.off { color: #999; }
.chev.grey { color: #777; }
.up { transform: rotate(180deg); }
.left { transform: rotate(90deg); }
.rightw { transform: rotate(-90deg); }
.flip { transform: scaleX(-1); }
.dim { opacity: .5; }
.sep { width: 1px; background: #b4b4b4; height: 28px; }

/* title bar */
.titlebar { height: 30px; flex: none; background: #d5d5d5; display: grid; grid-template-columns: 29px 3px 29px 10px 30px 26px 30px 10px 30px 10px 4px 28px 12px 28px 12px 2px 30px 26px 409px 74px 726px 152px 6px 26px 14px 2px 28px 2px 44px 44px 44px; justify-items: center; align-items: center; padding-bottom: 1px; }
.context-head { align-self: stretch; justify-self: stretch; margin: 1px 0 -1px; border-top: 2px solid #cfa920; border-left: 1px solid #d0bd66; border-right: 1px solid #d0bd66; background: #d4cdad; text-align: center; line-height: 29px; letter-spacing: -.3px; }
.title { letter-spacing: -.27px; }
.quick { width: 151px; height: 23px; background: #fff; border: 1px solid #b0b0b0; border-radius: 3px; display: flex; align-items: center; gap: 3px; padding-left: 2px; color: #888; letter-spacing: -.1px; }
.lens { width: 14px; height: 14px; }

/* menu */
.menu { height: 30px; flex: none; background: #d5d5d5; border-bottom: 1px solid #aaa; display: grid; grid-template-columns: 55px 3px 51px 43px 73px 54px 47px 65px 60px 47px 55px 83px 77px 43px 2px 74px 1fr 63px 84px 18px; text-align: center; line-height: 30px; }
.menu > .chev { align-self: center; justify-self: center; margin-top: -5px; }
.file { background: #b14a4b; color: #fff; border-radius: 3px 3px 0 0; border: 1px solid #a86a6a; border-bottom: 0; line-height: 28px; }
.home { background: #f4f4f4; border: 1px solid #b4b4b4; border-bottom: 0; border-radius: 3px 3px 0 0; margin-bottom: -1px; line-height: 28px; color: #123a66; background-image: linear-gradient(#86a3b8, #86a3b8); background-size: 38px 2px; background-position: 50% 27px; background-repeat: no-repeat; }
.context-tab { background: #d4cdad; border: solid #d0bd66; border-width: 0 1px; }
.find-btn, .search-btn { display: flex; align-items: center; gap: 3px; height: 27px; margin-top: 1px; padding-left: 2px; }
.find-btn { background: #e4cf9f; border: 1px solid #b9b2a0; border-radius: 2px; padding-left: 1px; }

/* ribbon */
.ribbon { height: 103px; flex: none; display: grid; grid-template-columns: 268px 177px 217px 269px 209px 66px; border-bottom: 1px solid #444; }
.group { border-right: 1px solid #c0c0c0; display: flex; flex-direction: column; padding-top: 2px; }
.body { height: 85px; display: grid; }
.caption { text-align: center; color: #7d7d7d; line-height: 14px; }
.big { display: flex; flex-direction: column; align-items: center; text-align: center; padding-top: 2px; height: 84px; }
.big .i48 { margin-bottom: 5px; }
.big .chev { margin-top: 4px; }
.big span .chev { display: inline-block; margin: 0; vertical-align: 0; }
.on { background: #e4cf9f; border: 1px solid #bdb59f; border-radius: 2px; padding-top: 1px; }
.stack { display: grid; grid-template-rows: 28px 28px 28px; }
.stack > div { display: flex; align-items: center; gap: 3px; padding-bottom: 1px; }
.stack .chev { margin-left: 3px; }
.tools .body { grid-template-columns: 52px 50px 67px 96px; padding-left: 1px; }
.rows { grid-template-rows: 28px 28px 28px; }
.rows > div { display: grid; align-items: center; justify-items: center; }
.zoomrow { grid-template-columns: 31px 113px 30px; }
.fitrow { grid-template-columns: 29px 28px 28px 28px 4px 28px 28px; padding-left: 1px; }
.panerow { grid-template-columns: 29px 29px 28px 28px 28px 2px 30px; padding-left: 1px; }
.rows > .fitrow, .rows > .panerow { justify-content: start; }
.rows > div { justify-content: start; }
.combo { width: 113px; height: 23px; background: #fff; border: 1px solid #b0b0b0; border-radius: 2px; display: flex; align-items: center; justify-content: space-between; padding: 0 4px 1px 3px; letter-spacing: -.5px; }
.noted { position: relative; }
.noted::after { content: ""; position: absolute; width: 4px; height: 4px; border-radius: 2px; background: #6aa52a; right: 0; bottom: -2px; }
.objects .body { grid-template-columns: 54px 54px 53px 53px; justify-content: start; }
.comment .body { grid-template-columns: 110px 97px 1px 56px; padding-left: 4px; justify-content: start; }
.tall { height: 84px; }
.tri { border: solid transparent; border-width: 2px; border-right-color: #222; border-bottom-color: #222; margin: 12px 0 0 -1px; }
.linkgrp .body { grid-template-columns: 55px 150px; justify-content: start; }

/* document tabs */
.doctabs { height: 34px; flex: none; display: flex; align-items: flex-start; background: repeating-conic-gradient(#828282 0 25%, #8a8a8a 0 50%) 0 0 / 4px 4px; border-bottom: 3px solid #fff; }
.doctab { width: 208px; height: 34px; background: #fff; border-radius: 3px 3px 0 0; padding-left: 5px; display: flex; position: relative; line-height: 32px; letter-spacing: -.38px; }
.doctab::after { content: ""; position: absolute; left: 5px; bottom: 3px; width: 197px; height: 2px; background: #a5a5a5; }
.doctab span { width: 191px; }
.tabx { width: 6px; height: 6px; margin-top: 6px; }
.newtab { width: 27px; height: 27px; margin: 3px 0 0 2px; background: #c9c9c9; border-radius: 2px; display: grid; place-items: center; }
.closeall { width: 30px; height: 29px; margin: 1px 1px 0 auto; background: #d3d3d3; border-radius: 2px; display: grid; place-items: center; }

/* workspace */
.work { flex: 1; display: flex; min-height: 0; }
.side { width: 31px; flex: none; display: flex; flex-direction: column; align-items: center; gap: 4px; border-bottom: 1px solid #ccc; background: #f3f3f3; }
.side > .i24, .side .noted { margin-right: 1px; }
.pin { width: 31px; height: 11px; background: #e4e4e4; padding: 2px 0 0 22px; }
.grip { width: 26px; height: 10px; margin: -2px 0 -2px; background: radial-gradient(circle at 1px 1px, #bbb 1px, transparent 1px) 0 0 / 3px 3px; }
.side hr { width: 28px; height: 1px; border: 0; background: #c4c4c4; margin: -1px 2px 0 0; }
.right { flex: 1; display: flex; flex-direction: column; min-width: 0; }
.viewrow { height: 789px; display: flex; }
.viewport { position: relative; width: 1874px; background: #fff; border: 1px solid #555; box-shadow: inset 2px 2px 2px #bbb, inset -1px -1px 1px #bbb; overflow: hidden; }
.drawing { text-rendering: geometricPrecision; }
.cad { font: 165px "Liberation Sans", Arial, sans-serif; letter-spacing: 0; }
.findbar { position: absolute; right: 1px; top: 0; width: 310px; height: 33px; background: #f4f4f4; border: 1px solid #c0c0c0; border-radius: 4px; box-shadow: 0 1px 5px rgba(0,0,0,.5); display: grid; grid-template-columns: 27px 192px 19px 25px 19px 25px; align-items: center; justify-items: center; padding-bottom: 1px; }
.findbar .chev { width: 9px; height: 7px; }
.findbox { width: 192px; height: 24px; background: #fff; border: 1px solid #aaa; border-radius: 3px; display: grid; grid-template-columns: 136px 20px 16px 17px; align-items: center; padding-left: 3px; }
.findbox em { font-style: normal; color: #666; }
.redx { width: 10px; height: 10px; color: #d03a3a; }
.fx { width: 9px; height: 9px; color: #222; }
.findbox .chev { justify-self: center; }
.vscroll { width: 15px; background: #f0f0f0; display: flex; flex-direction: column; align-items: center; padding: 5px 0; }
.hits { margin: 422px 0 auto; }
.hscroll { height: 15px; background: #efefef; display: flex; align-items: center; padding: 0 18px 0 3px; }
.hscroll .chev { color: #666; }
.thumb { width: 87px; height: 5px; border-radius: 3px; background: #808080; margin: 0 auto 0 143px; }
.status { height: 31px; display: grid; grid-template-columns: 12px 27px 56px 11px 4px 19px 75px 4px 20px 18px 550px 14px 28px 28px 98px 28px 28px 4px 28px 28px 359px 13px 84px 2px 30px 102px 30px 12px 28px 29px 28px 28px 14px 24px 11px 15px; align-items: center; justify-items: center; }
.dock { width: 9px; height: 24px; }
.opt { letter-spacing: -.1px; }
.dims, .xy { justify-self: start; letter-spacing: -.3px; padding-left: 1px; }
.xy { letter-spacing: 0; }
.pager { color: #bbb; }
.pagebox { width: 96px; height: 23px; background: #fcfcfc; border: 1px solid #b8b8b8; border-radius: 2px; display: flex; align-items: center; justify-content: flex-end; padding-right: 3px; color: #666; }
.pagebox sup { font-size: 11px; vertical-align: 0; margin-top: -5px; }
.status .combo { width: 82px; }
.sel { width: 28px; height: 28px; background: #e4cf9f; border: 1px solid #bdb59f; display: grid; place-items: center; }
.faint { opacity: .6; }
.more { background: #e8e8e8; width: 13px; align-self: stretch; justify-self: end; display: grid; justify-items: center; padding-top: 1px; }
```
